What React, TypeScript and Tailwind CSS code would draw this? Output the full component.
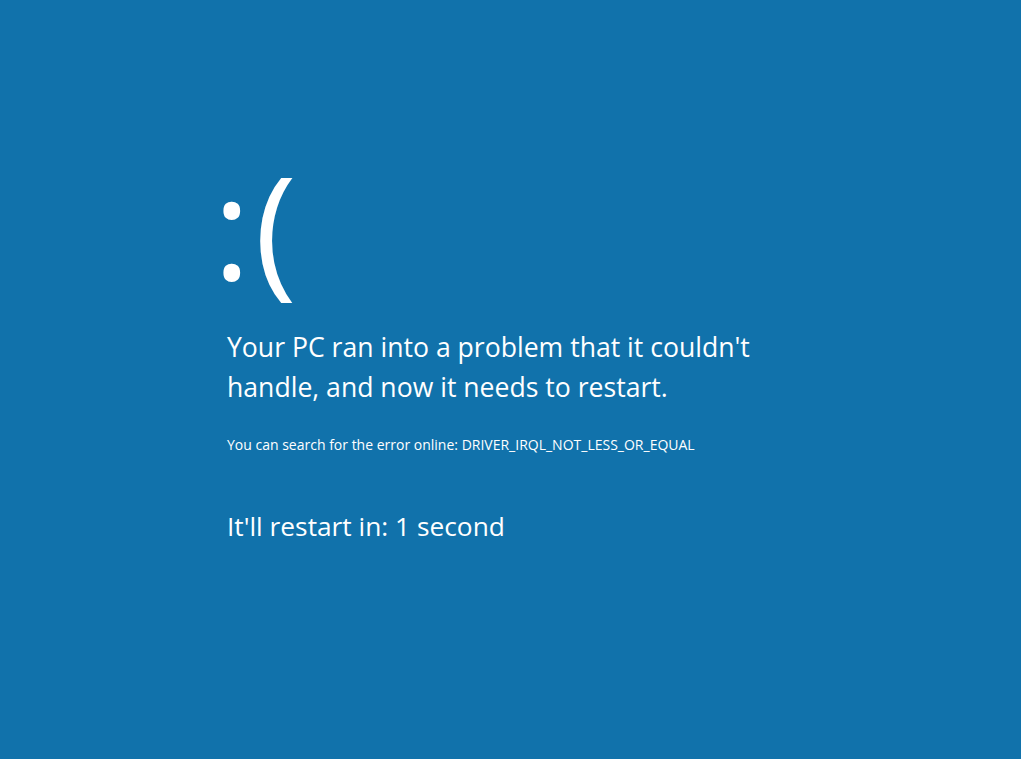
export default function App() {
  return (
    <div
      className="w-[1021px] h-[759px] bg-[#1172ab] text-white overflow-hidden"
      style={{ fontFamily: '"Open Sans", "Noto Sans", sans-serif' }}
    >
      <div className="flex flex-col pl-[227px] pt-[145px]">
        <div className="text-[143px] leading-[160px] font-normal h-[182px] ml-[-14px] tracking-[4px]">:(</div>
        <div className="text-[26.6px] leading-[40px] font-normal w-[580px]">
          Your PC ran into a problem that it couldn't handle, and now it needs to restart.
        </div>
        <div className="text-[14px] leading-[20px] mt-[28px]">
          You can search for the error online: DRIVER_IRQL_NOT_LESS_OR_EQUAL
        </div>
        <div className="text-[26.3px] leading-[40px] mt-[51px]">It'll restart in: 1 second</div>
      </div>
    </div>
  );
}
